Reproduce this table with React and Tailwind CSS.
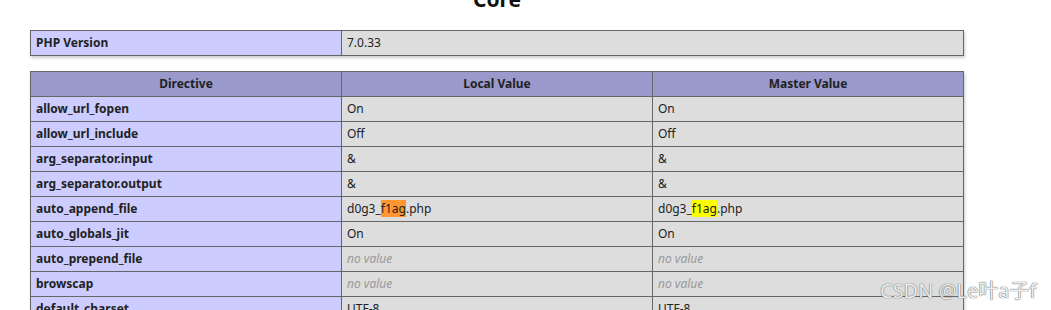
import React from "react";

const rows = [
  ["allow_url_fopen", "On", "On"],
  ["allow_url_include", "Off", "Off"],
  ["arg_separator.input", "&", "&"],
  ["arg_separator.output", "&", "&"],
  ["auto_append_file", "flag", "flag"],
  ["auto_globals_jit", "On", "On"],
  ["auto_prepend_file", null, null],
  ["browscap", null, null],
  ["default_charset", "UTF-8", "UTF-8"],
];

const Value = ({ v, hl }) => {
  if (v === null) return <i className="text-[#999]">no value</i>;
  if (v === "flag")
    return (
      <>
        d0g3_<span className={hl}>f1ag</span>.php
      </>
    );
  return v;
};

const td = "border border-[#666] px-[5px] py-[4px] text-[12px] leading-[16px] align-baseline";

const App = () => (
  <div className="relative h-[310px] overflow-hidden bg-white font-['Noto_Sans','Open_Sans',sans-serif] text-[#222]">
    <div className="pl-[30px]">
      <h2 className="w-[934px] -mt-[14px] text-center text-[21px] font-bold leading-[26px] text-[#111]">Core</h2>
      <table className="mt-[18px] w-[934px] table-fixed border-collapse shadow-[1px_2px_3px_#ccc]">
        <tbody>
          <tr>
            <td className={`${td} w-[311px] bg-[#ccf] font-bold`}>PHP Version</td>
            <td className={`${td} bg-[#ddd]`}>7.0.33</td>
          </tr>
        </tbody>
      </table>
      <table className="mt-[15px] w-[934px] table-fixed border-collapse shadow-[1px_2px_3px_#ccc]">
        <thead>
          <tr>
            <th className={`${td} w-[311px] bg-[#99c] font-bold`}>Directive</th>
            <th className={`${td} w-[311px] bg-[#99c] font-bold`}>Local Value</th>
            <th className={`${td} bg-[#99c] font-bold`}>Master Value</th>
          </tr>
        </thead>
        <tbody>
          {rows.map((r) => (
            <tr key={r[0]}>
              <td className={`${td} bg-[#ccf] font-bold`}>{r[0]}</td>
              <td className={`${td} bg-[#ddd]`}>
                <Value v={r[1]} hl="bg-[#ff9632]" />
              </td>
              <td className={`${td} bg-[#ddd]`}>
                <Value v={r[2]} hl="bg-[#ffff00]" />
              </td>
            </tr>
          ))}
        </tbody>
      </table>
    </div>
    <div className="absolute left-[880px] top-[278px] text-[20px] leading-[26px] text-[#eee] [text-shadow:0_0_1px_#666,0_0_1px_#666] font-['Noto_Sans','Noto_Sans_CJK_SC',sans-serif]">
      CSDN @Le叶a子f
    </div>
  </div>
);

export default App;
